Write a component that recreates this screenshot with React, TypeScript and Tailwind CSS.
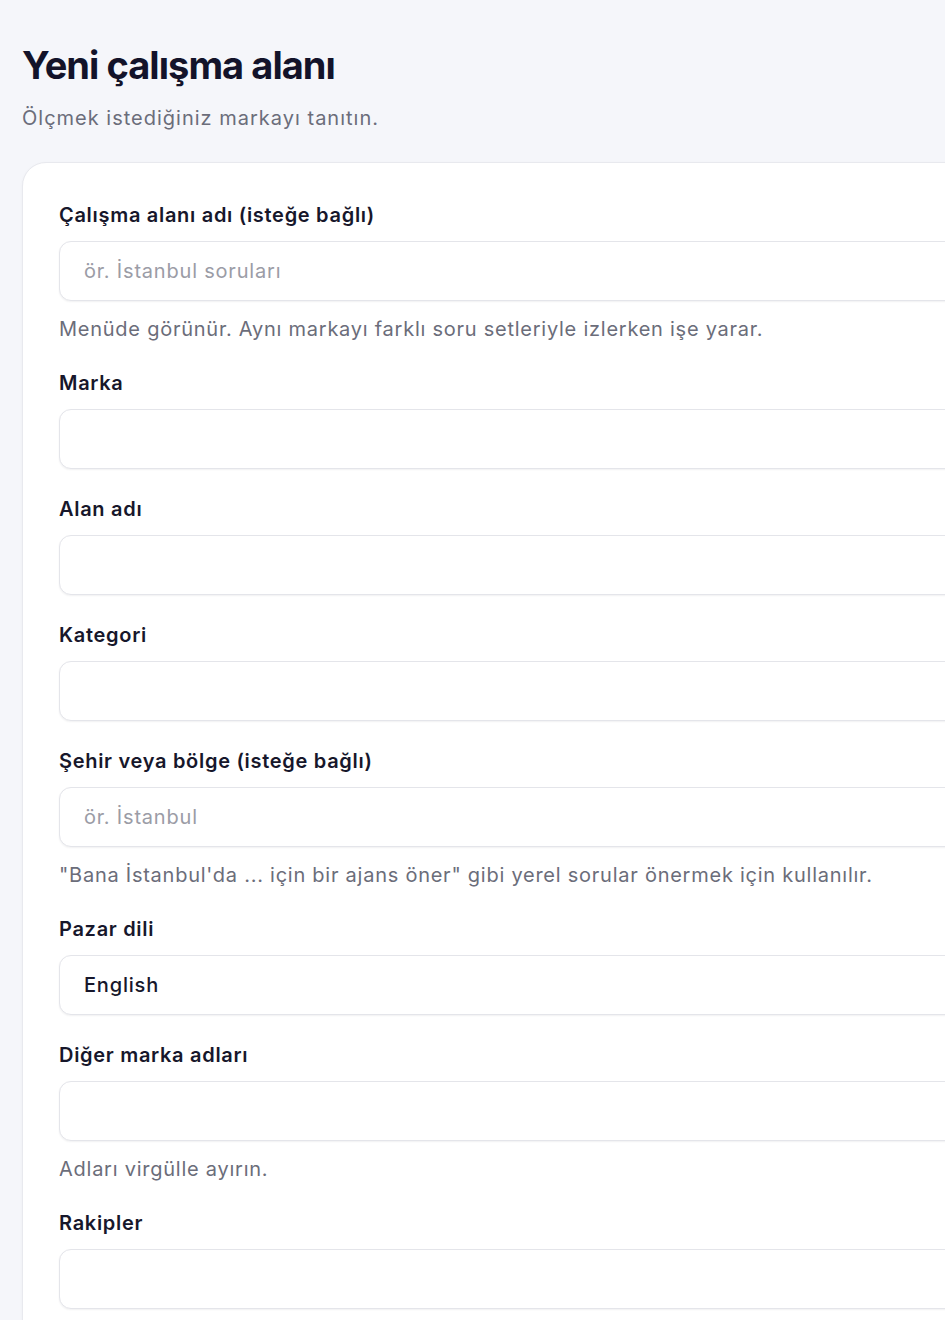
import type { ReactNode } from 'react'

const font = { fontFamily: 'Inter, "Noto Sans", sans-serif' }

type FieldProps = {
  label: string
  placeholder?: string
  value?: string
  hint?: ReactNode
}

function Field({ label, placeholder, value, hint }: FieldProps) {
  return (
    <div className="flex flex-col">
      <label className="pt-px text-[20px] font-semibold leading-[28px] tracking-[0.7px] text-[#17172b]">
        {label}
      </label>
      <input
        readOnly
        value={value ?? ''}
        placeholder={placeholder}
        className="mt-[12px] h-[60px] w-full rounded-xl border border-[#e4e5ea] bg-white px-[24px] text-[20px] font-medium tracking-[0.8px] text-[#17172b] shadow-[0_1px_2px_rgba(16,24,40,0.06)] outline-none placeholder:font-normal placeholder:text-[#9b9ca6]"
      />
      {hint && (
        <p className="mt-[14px] text-[20px] leading-[28px] tracking-[0.75px] text-[#6b6d7a]">{hint}</p>
      )}
    </div>
  )
}

export default function App() {
  return (
    <div className="h-[1320px] w-full overflow-hidden bg-[#f5f6fa]" style={font}>
      <div className="pl-[22px] pt-[42px]">
        <h1 className="text-[38px] font-bold leading-[46px] tracking-[-0.025em] text-[#13132a]">
          Yeni çalışma alanı
        </h1>
        <p className="mt-[16px] text-[20px] leading-[28px] tracking-[1px] text-[#6b6d7a]">
          Ölçmek istediğiniz markayı tanıtın.
        </p>

        <div className="mt-[30px] w-[1100px] rounded-3xl border border-[#e8e9ee] bg-white px-[36px] pb-10 pt-[37px] shadow-[0_1px_3px_rgba(16,24,40,0.04)]">
          <div className="flex w-[1000px] flex-col gap-[25px]">
            <Field
              label="Çalışma alanı adı (isteğe bağlı)"
              placeholder="ör. İstanbul soruları"
              hint="Menüde görünür. Aynı markayı farklı soru setleriyle izlerken işe yarar."
            />
            <Field label="Marka" />
            <Field label="Alan adı" />
            <Field label="Kategori" />
            <Field
              label="Şehir veya bölge (isteğe bağlı)"
              placeholder="ör. İstanbul"
              hint={'"Bana İstanbul\'da ... için bir ajans öner" gibi yerel sorular önermek için kullanılır.'}
            />
            <Field label="Pazar dili" value="English" />
            <Field label="Diğer marka adları" hint="Adları virgülle ayırın." />
            <Field label="Rakipler" />
          </div>
        </div>
      </div>
    </div>
  )
}
